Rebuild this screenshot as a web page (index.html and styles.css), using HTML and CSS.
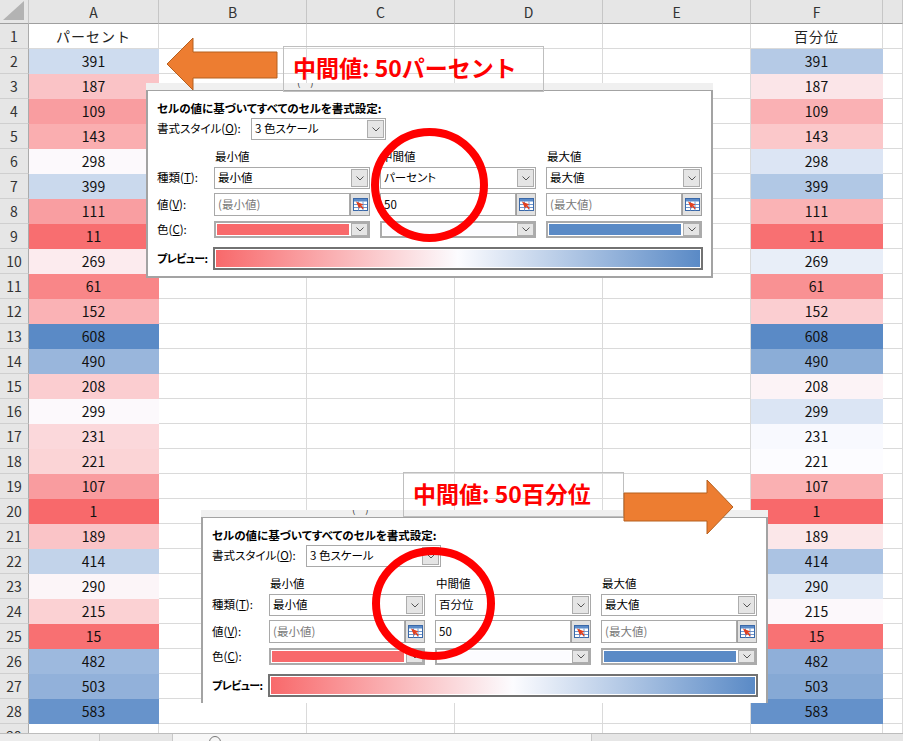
FILE: index.html
```html
<!DOCTYPE html>
<html lang="ja">
<head>
<meta charset="utf-8">
<title>3色スケール</title>
<link rel="stylesheet" href="styles.css">
</head>
<body>
<div class="app">
  <div class="sheet">
    <div class="grid">
      <div class="corner"><svg class="tri" width="22" height="19" viewBox="0 0 22 19"><polygon points="21,0 21,19 0,19" fill="#b3b3b3"/></svg></div>
      <div class="ch">A</div><div class="ch">B</div><div class="ch">C</div><div class="ch">D</div><div class="ch">E</div><div class="ch">F</div><div class="ch"></div>

      <div class="rh">1</div><div class="c jp">パーセント</div><div class="c"></div><div class="c"></div><div class="c"></div><div class="c"></div><div class="c jp">百分位</div><div class="c"></div>
      <div class="rh">2</div><div class="c v" style="background:rgb(206,220,239)">391</div><div class="c"></div><div class="c"></div><div class="c"></div><div class="c"></div><div class="c v" style="background:rgb(181,202,230)">391</div><div class="c"></div>
      <div class="rh">3</div><div class="c v" style="background:rgb(250,195,198)">187</div><div class="c"></div><div class="c"></div><div class="c"></div><div class="c"></div><div class="c v" style="background:rgb(251,229,232)">187</div><div class="c"></div>
      <div class="rh">4</div><div class="c v" style="background:rgb(249,157,160)">109</div><div class="c"></div><div class="c"></div><div class="c"></div><div class="c"></div><div class="c v" style="background:rgb(250,177,180)">109</div><div class="c"></div>
      <div class="rh">5</div><div class="c v" style="background:rgb(250,174,176)">143</div><div class="c"></div><div class="c"></div><div class="c"></div><div class="c"></div><div class="c v" style="background:rgb(251,200,202)">143</div><div class="c"></div>
      <div class="rh">6</div><div class="c v" style="background:rgb(252,249,252)">298</div><div class="c"></div><div class="c"></div><div class="c"></div><div class="c"></div><div class="c v" style="background:rgb(220,229,244)">298</div><div class="c"></div>
      <div class="rh">7</div><div class="c v" style="background:rgb(202,217,237)">399</div><div class="c"></div><div class="c"></div><div class="c"></div><div class="c"></div><div class="c v" style="background:rgb(177,200,229)">399</div><div class="c"></div>
      <div class="rh">8</div><div class="c v" style="background:rgb(249,158,161)">111</div><div class="c"></div><div class="c"></div><div class="c"></div><div class="c"></div><div class="c v" style="background:rgb(250,179,181)">111</div><div class="c"></div>
      <div class="rh">9</div><div class="c v" style="background:rgb(248,110,112)">11</div><div class="c"></div><div class="c"></div><div class="c"></div><div class="c"></div><div class="c v" style="background:rgb(248,112,114)">11</div><div class="c"></div>
      <div class="rh">10</div><div class="c v" style="background:rgb(252,235,238)">269</div><div class="c"></div><div class="c"></div><div class="c"></div><div class="c"></div><div class="c v" style="background:rgb(232,238,248)">269</div><div class="c"></div>
      <div class="rh">11</div><div class="c v" style="background:rgb(249,134,136)">61</div><div class="c"></div><div class="c"></div><div class="c"></div><div class="c"></div><div class="c v" style="background:rgb(249,145,147)">61</div><div class="c"></div>
      <div class="rh">12</div><div class="c v" style="background:rgb(250,178,181)">152</div><div class="c"></div><div class="c"></div><div class="c"></div><div class="c"></div><div class="c v" style="background:rgb(251,206,209)">152</div><div class="c"></div>
      <div class="rh">13</div><div class="c v" style="background:rgb(90,138,198)">608</div><div class="c"></div><div class="c"></div><div class="c"></div><div class="c"></div><div class="c v" style="background:rgb(90,138,198)">608</div><div class="c"></div>
      <div class="rh">14</div><div class="c v" style="background:rgb(153,182,220)">490</div><div class="c"></div><div class="c"></div><div class="c"></div><div class="c"></div><div class="c v" style="background:rgb(139,173,215)">490</div><div class="c"></div>
      <div class="rh">15</div><div class="c v" style="background:rgb(251,205,208)">208</div><div class="c"></div><div class="c"></div><div class="c"></div><div class="c"></div><div class="c v" style="background:rgb(252,243,246)">208</div><div class="c"></div>
      <div class="rh">16</div><div class="c v" style="background:rgb(252,249,252)">299</div><div class="c"></div><div class="c"></div><div class="c"></div><div class="c"></div><div class="c v" style="background:rgb(219,229,244)">299</div><div class="c"></div>
      <div class="rh">17</div><div class="c v" style="background:rgb(251,216,219)">231</div><div class="c"></div><div class="c"></div><div class="c"></div><div class="c"></div><div class="c v" style="background:rgb(248,249,254)">231</div><div class="c"></div>
      <div class="rh">18</div><div class="c v" style="background:rgb(251,212,214)">221</div><div class="c"></div><div class="c"></div><div class="c"></div><div class="c"></div><div class="c v" style="background:rgb(252,252,255)">221</div><div class="c"></div>
      <div class="rh">19</div><div class="c v" style="background:rgb(249,156,159)">107</div><div class="c"></div><div class="c"></div><div class="c"></div><div class="c"></div><div class="c v" style="background:rgb(250,176,178)">107</div><div class="c"></div>
      <div class="rh">20</div><div class="c v" style="background:rgb(248,105,107)">1</div><div class="c"></div><div class="c"></div><div class="c"></div><div class="c"></div><div class="c v" style="background:rgb(248,105,107)">1</div><div class="c"></div>
      <div class="rh">21</div><div class="c v" style="background:rgb(250,196,199)">189</div><div class="c"></div><div class="c"></div><div class="c"></div><div class="c"></div><div class="c v" style="background:rgb(251,231,233)">189</div><div class="c"></div>
      <div class="rh">22</div><div class="c v" style="background:rgb(194,211,234)">414</div><div class="c"></div><div class="c"></div><div class="c"></div><div class="c"></div><div class="c v" style="background:rgb(171,195,227)">414</div><div class="c"></div>
      <div class="rh">23</div><div class="c v" style="background:rgb(252,245,248)">290</div><div class="c"></div><div class="c"></div><div class="c"></div><div class="c"></div><div class="c v" style="background:rgb(223,232,245)">290</div><div class="c"></div>
      <div class="rh">24</div><div class="c v" style="background:rgb(251,209,211)">215</div><div class="c"></div><div class="c"></div><div class="c"></div><div class="c"></div><div class="c v" style="background:rgb(252,248,251)">215</div><div class="c"></div>
      <div class="rh">25</div><div class="c v" style="background:rgb(248,112,114)">15</div><div class="c"></div><div class="c"></div><div class="c"></div><div class="c"></div><div class="c v" style="background:rgb(248,114,116)">15</div><div class="c"></div>
      <div class="rh">26</div><div class="c v" style="background:rgb(157,185,222)">482</div><div class="c"></div><div class="c"></div><div class="c"></div><div class="c"></div><div class="c v" style="background:rgb(143,175,217)">482</div><div class="c"></div>
      <div class="rh">27</div><div class="c v" style="background:rgb(146,177,218)">503</div><div class="c"></div><div class="c"></div><div class="c"></div><div class="c"></div><div class="c v" style="background:rgb(134,169,213)">503</div><div class="c"></div>
      <div class="rh">28</div><div class="c v" style="background:rgb(103,147,203)">583</div><div class="c"></div><div class="c"></div><div class="c"></div><div class="c"></div><div class="c v" style="background:rgb(100,145,202)">583</div><div class="c"></div>
      <div class="rh">29</div><div class="c"></div><div class="c"></div><div class="c"></div><div class="c"></div><div class="c"></div><div class="c"></div><div class="c"></div>
    </div>
  </div>
  <div class="tabbar"><div class="tb-nav"></div><div class="tb-tabs"><span class="tb-plus"></span></div></div>

  <!-- dialog 1 -->
  <div class="dlg dlg1">
    <div class="dstrip"><span class="frag f1">ー</span><span class="frag f2">(ー)</span></div>
    <div class="dbody">
      <div class="dtitle">セルの値に基づいてすべてのセルを書式設定:</div>
      <div class="dstyle"><span class="lab wide">書式スタイル(<u>O</u>):</span><div class="combo stylecombo"><span class="txt">3 色スケール</span><span class="ddbtn"><svg width="8" height="5" viewBox="0 0 8 5"><polyline points="0.5,0.5 4,4 7.5,0.5" fill="none" stroke="#555"/></svg></span></div></div>
      <div class="drow dheads"><span></span><span>最小値</span><span>中間値</span><span>最大値</span></div>
      <div class="drow dtype"><span class="lab">種類(<u>T</u>):</span>
        <div class="combo"><span class="txt">最小値</span><span class="ddbtn"><svg width="8" height="5" viewBox="0 0 8 5"><polyline points="0.5,0.5 4,4 7.5,0.5" fill="none" stroke="#555"/></svg></span></div>
        <div class="combo"><span class="txt">パーセント</span><span class="ddbtn"><svg width="8" height="5" viewBox="0 0 8 5"><polyline points="0.5,0.5 4,4 7.5,0.5" fill="none" stroke="#555"/></svg></span></div>
        <div class="combo"><span class="txt">最大値</span><span class="ddbtn"><svg width="8" height="5" viewBox="0 0 8 5"><polyline points="0.5,0.5 4,4 7.5,0.5" fill="none" stroke="#555"/></svg></span></div>
      </div>
      <div class="drow dval"><span class="lab">値(<u>V</u>):</span>
        <div class="inp"><span class="field ph">(最小値)</span><span class="refbtn"><svg width="15" height="13" viewBox="0 0 15 13"><rect x="0.5" y="0.5" width="14" height="12" fill="#fff" stroke="#3a68a8"/><rect x="1" y="1" width="13" height="2.5" fill="#5b8bc9"/><path d="M1 6.5H14M1 9.5H14M5.5 3.5V12.5M10 3.5V12.5" stroke="#6f97cf"/><path d="M3 3.5 L10.5 6.5 L8.3 7.4 L10.8 10 L9.6 11.2 L7.1 8.6 L6.2 10.8Z" fill="#e2401f"/></svg></span></div>
        <div class="inp"><span class="field">50</span><span class="refbtn"><svg width="15" height="13" viewBox="0 0 15 13"><rect x="0.5" y="0.5" width="14" height="12" fill="#fff" stroke="#3a68a8"/><rect x="1" y="1" width="13" height="2.5" fill="#5b8bc9"/><path d="M1 6.5H14M1 9.5H14M5.5 3.5V12.5M10 3.5V12.5" stroke="#6f97cf"/><path d="M3 3.5 L10.5 6.5 L8.3 7.4 L10.8 10 L9.6 11.2 L7.1 8.6 L6.2 10.8Z" fill="#e2401f"/></svg></span></div>
        <div class="inp"><span class="field ph">(最大値)</span><span class="refbtn"><svg width="15" height="13" viewBox="0 0 15 13"><rect x="0.5" y="0.5" width="14" height="12" fill="#fff" stroke="#3a68a8"/><rect x="1" y="1" width="13" height="2.5" fill="#5b8bc9"/><path d="M1 6.5H14M1 9.5H14M5.5 3.5V12.5M10 3.5V12.5" stroke="#6f97cf"/><path d="M3 3.5 L10.5 6.5 L8.3 7.4 L10.8 10 L9.6 11.2 L7.1 8.6 L6.2 10.8Z" fill="#e2401f"/></svg></span></div>
      </div>
      <div class="drow dcol"><span class="lab">色(<u>C</u>):</span>
        <div class="ccombo"><span class="sw sw-min"></span><span class="ddbtn"><svg width="8" height="5" viewBox="0 0 8 5"><polyline points="0.5,0.5 4,4 7.5,0.5" fill="none" stroke="#555"/></svg></span></div>
        <div class="ccombo"><span class="sw sw-mid"></span><span class="ddbtn"><svg width="8" height="5" viewBox="0 0 8 5"><polyline points="0.5,0.5 4,4 7.5,0.5" fill="none" stroke="#555"/></svg></span></div>
        <div class="ccombo"><span class="sw sw-max"></span><span class="ddbtn"><svg width="8" height="5" viewBox="0 0 8 5"><polyline points="0.5,0.5 4,4 7.5,0.5" fill="none" stroke="#555"/></svg></span></div>
      </div>
      <div class="dprev"><span class="lab plab">プレビュー:</span><div class="pbox"><div class="grad"></div></div></div>
    </div>
  </div>

  <!-- dialog 2 -->
  <div class="dlg dlg2">
    <div class="dstrip"><span class="frag f1">ー</span><span class="frag f2">(ー)</span></div>
    <div class="dbody">
      <div class="dtitle">セルの値に基づいてすべてのセルを書式設定:</div>
      <div class="dstyle"><span class="lab wide">書式スタイル(<u>O</u>):</span><div class="combo stylecombo"><span class="txt">3 色スケール</span><span class="ddbtn"><svg width="8" height="5" viewBox="0 0 8 5"><polyline points="0.5,0.5 4,4 7.5,0.5" fill="none" stroke="#555"/></svg></span></div></div>
      <div class="drow dheads"><span></span><span>最小値</span><span>中間値</span><span>最大値</span></div>
      <div class="drow dtype"><span class="lab">種類(<u>T</u>):</span>
        <div class="combo"><span class="txt">最小値</span><span class="ddbtn"><svg width="8" height="5" viewBox="0 0 8 5"><polyline points="0.5,0.5 4,4 7.5,0.5" fill="none" stroke="#555"/></svg></span></div>
        <div class="combo"><span class="txt">百分位</span><span class="ddbtn"><svg width="8" height="5" viewBox="0 0 8 5"><polyline points="0.5,0.5 4,4 7.5,0.5" fill="none" stroke="#555"/></svg></span></div>
        <div class="combo"><span class="txt">最大値</span><span class="ddbtn"><svg width="8" height="5" viewBox="0 0 8 5"><polyline points="0.5,0.5 4,4 7.5,0.5" fill="none" stroke="#555"/></svg></span></div>
      </div>
      <div class="drow dval"><span class="lab">値(<u>V</u>):</span>
        <div class="inp"><span class="field ph">(最小値)</span><span class="refbtn"><svg width="15" height="13" viewBox="0 0 15 13"><rect x="0.5" y="0.5" width="14" height="12" fill="#fff" stroke="#3a68a8"/><rect x="1" y="1" width="13" height="2.5" fill="#5b8bc9"/><path d="M1 6.5H14M1 9.5H14M5.5 3.5V12.5M10 3.5V12.5" stroke="#6f97cf"/><path d="M3 3.5 L10.5 6.5 L8.3 7.4 L10.8 10 L9.6 11.2 L7.1 8.6 L6.2 10.8Z" fill="#e2401f"/></svg></span></div>
        <div class="inp"><span class="field">50</span><span class="refbtn"><svg width="15" height="13" viewBox="0 0 15 13"><rect x="0.5" y="0.5" width="14" height="12" fill="#fff" stroke="#3a68a8"/><rect x="1" y="1" width="13" height="2.5" fill="#5b8bc9"/><path d="M1 6.5H14M1 9.5H14M5.5 3.5V12.5M10 3.5V12.5" stroke="#6f97cf"/><path d="M3 3.5 L10.5 6.5 L8.3 7.4 L10.8 10 L9.6 11.2 L7.1 8.6 L6.2 10.8Z" fill="#e2401f"/></svg></span></div>
        <div class="inp"><span class="field ph">(最大値)</span><span class="refbtn"><svg width="15" height="13" viewBox="0 0 15 13"><rect x="0.5" y="0.5" width="14" height="12" fill="#fff" stroke="#3a68a8"/><rect x="1" y="1" width="13" height="2.5" fill="#5b8bc9"/><path d="M1 6.5H14M1 9.5H14M5.5 3.5V12.5M10 3.5V12.5" stroke="#6f97cf"/><path d="M3 3.5 L10.5 6.5 L8.3 7.4 L10.8 10 L9.6 11.2 L7.1 8.6 L6.2 10.8Z" fill="#e2401f"/></svg></span></div>
      </div>
      <div class="drow dcol"><span class="lab">色(<u>C</u>):</span>
        <div class="ccombo"><span class="sw sw-min"></span><span class="ddbtn"><svg width="8" height="5" viewBox="0 0 8 5"><polyline points="0.5,0.5 4,4 7.5,0.5" fill="none" stroke="#555"/></svg></span></div>
        <div class="ccombo"><span class="sw sw-mid"></span><span class="ddbtn"><svg width="8" height="5" viewBox="0 0 8 5"><polyline points="0.5,0.5 4,4 7.5,0.5" fill="none" stroke="#555"/></svg></span></div>
        <div class="ccombo"><span class="sw sw-max"></span><span class="ddbtn"><svg width="8" height="5" viewBox="0 0 8 5"><polyline points="0.5,0.5 4,4 7.5,0.5" fill="none" stroke="#555"/></svg></span></div>
      </div>
      <div class="dprev"><span class="lab plab">プレビュー:</span><div class="pbox"><div class="grad"></div></div></div>
    </div>
  </div>

  <div class="note note1">中間値: 50パーセント</div>
  <div class="note note2">中間値: 50百分位</div>

  <svg class="marks" width="903" height="741" viewBox="0 0 903 741">
    <polygon points="167,64 193,38 193,52 277,52 277,78 193,78 193,90" fill="#ed7d31" stroke="#b5601f" stroke-width="1"/>
    <polygon points="733,507 707,480 707,493 624,493 624,521 707,521 707,534" fill="#ed7d31" stroke="#b5601f" stroke-width="1"/>
    <ellipse cx="429.5" cy="185" rx="54.5" ry="53" fill="none" stroke="#ff0000" stroke-width="8"/>
    <ellipse cx="433.5" cy="603.5" rx="57.5" ry="52.5" fill="none" stroke="#ff0000" stroke-width="8"/>
  </svg>
</div>
</body>
</html>
```

FILE: styles.css
```css
* { box-sizing: border-box; margin: 0; padding: 0; }
html, body { width: 903px; height: 741px; overflow: hidden; background: #fff; }
body { font-family: "Noto Sans CJK JP", "Noto Sans", sans-serif; color: #000; }

.app { position: relative; width: 903px; height: 741px; overflow: hidden; display: flex; flex-direction: column; }

/* spreadsheet */
.sheet { height: 733px; overflow: hidden; flex: none; }
.grid {
  display: grid;
  grid-template-columns: 29px 130px 148px 148px 148px 148px 132px 1fr;
  grid-template-rows: 24px;
  grid-auto-rows: 25px;
}
.corner { background: #e6e6e6; border-right: 1px solid #c6c6c6; border-bottom: 1px solid #9f9f9f; display: flex; align-items: flex-end; justify-content: flex-end; padding: 0 3px 3px 0; }
.ch {
  background: #e6e6e6; border-right: 1px solid #c6c6c6; border-bottom: 1px solid #9f9f9f;
  font-size: 14px; color: #333; display: flex; align-items: center; justify-content: center;
}
.rh {
  background: #e6e6e6; border-right: 1px solid #ababab; border-bottom: 1px solid #cfcfcf;
  font-size: 14px; color: #333; display: flex; align-items: center; justify-content: center;
}
.c {
  border-right: 1px solid #dadada; border-bottom: 1px solid #dadada;
  font-size: 14px; color: #111; display: flex; align-items: center; justify-content: center;
}
.c.v { border-color: transparent; }
.c.jp { letter-spacing: 1px; color: #222; }

.tabbar { flex: 1; background: #e6e6e6; border-top: 1px solid #bdbdbd; display: flex; }
.tb-nav { width: 100px; background: #ececec; border-right: 1px solid #c8c8c8; }
.tb-tabs { margin-left: 72px; width: 420px; background: #f7f7f7; border-left: 1px solid #c8c8c8; border-right: 1px solid #c8c8c8; position: relative; }
.tb-plus { position: absolute; left: 36px; top: 2px; width: 12px; height: 12px; border: 1px solid #777; border-radius: 50%; }

/* dialogs */
.dlg {
  position: absolute; width: 567px; display: flex; flex-direction: column;
  font-size: 11.5px; color: #000; line-height: 1; font-feature-settings: "palt" 1;
}
.dlg1 { left: 146px; top: 83px; height: 195px; }
.dlg2 { left: 201px; top: 510px; height: 193px; }
.dstrip { height: 7px; flex: none; background: #f0f0f0; position: relative; overflow: hidden; }
.frag { position: absolute; top: -6px; font-size: 10px; line-height: 10px; color: #444; }
.f1 { left: 57px; }
.f2 { left: 151px; }
.dbody {
  flex: 1; background: #fff; border: 2px solid #a3a3a3; border-top: 1px solid #a3a3a3;
  padding-left: 9px; display: flex; flex-direction: column;
}
.dlg2 .dbody { border-bottom: none; }
.dtitle { margin-top: 9px; height: 16px; line-height: 16px; font-weight: bold; }
.dstyle { margin-top: 2px; height: 22px; display: flex; align-items: center; }
.lab { white-space: nowrap; }
.lab.wide { width: 94px; }
.drow { display: grid; grid-template-columns: 47px 156px 156px 156px; column-gap: 10px; align-items: stretch; }
.drow > .lab { align-self: center; }
.dheads { margin-top: 8px; height: 16px; line-height: 16px; }
.dheads span { padding-left: 1px; }
.dtype { margin-top: 3px; height: 22px; }
.dval { margin-top: 4px; height: 23px; }
.dcol { margin-top: 5px; height: 17px; }
.dprev { margin-top: 9px; height: 23px; display: flex; align-items: center; }

.combo { border: 1px solid #a9a9a9; background: #fff; display: flex; align-items: center; padding-left: 3px; }
.stylecombo { width: 135px; height: 22px; }
.combo .txt { flex: 1; white-space: nowrap; }
.ddbtn {
  width: 17px; align-self: stretch; margin: 1px; flex: none;
  background: #e5e5e5; border: 1px solid #adadad;
  display: flex; align-items: center; justify-content: center;
}

.inp { display: flex; }
.field { flex: 1; border: 1px solid #a9a9a9; padding-left: 3px; display: flex; align-items: center; }
.ph { color: #7a7a7a; }
.refbtn {
  width: 20px; flex: none; border: 1px solid #a0a0a0; background: #e1e1e1;
  display: flex; align-items: center; justify-content: center;
}

.ccombo { border: 2px solid #ababab; background: #fff; display: flex; padding: 1px; }
.ccombo .ddbtn { margin: -1px -1px -1px 2px; }
.sw { flex: 1; }
.sw-min { background: #f8696b; }
.sw-mid { background: #fcfcff; }
.sw-max { background: #5a8ac6; }

.plab { width: 56px; font-weight: bold; font-size: 11px; letter-spacing: -0.6px; }
.pbox { width: 490px; height: 23px; border: 2px solid #727272; padding: 1px; background: #fff; }
.grad { width: 100%; height: 100%; background: linear-gradient(to right, #f8696b 0%, #fcfcff 50%, #5a8ac6 100%); }

/* callout notes */
.note {
  position: absolute; border: 1px solid #bfbfbf; color: #ff0000;
  font-weight: bold; font-size: 23px; line-height: 40px; padding-left: 9px; white-space: nowrap;
}
.note1 { left: 283px; top: 46px; width: 261px; height: 46px; }
.note2 { left: 403px; top: 472px; width: 221px; height: 45px; }

.marks { position: absolute; left: 0; top: 0; pointer-events: none; }
```
